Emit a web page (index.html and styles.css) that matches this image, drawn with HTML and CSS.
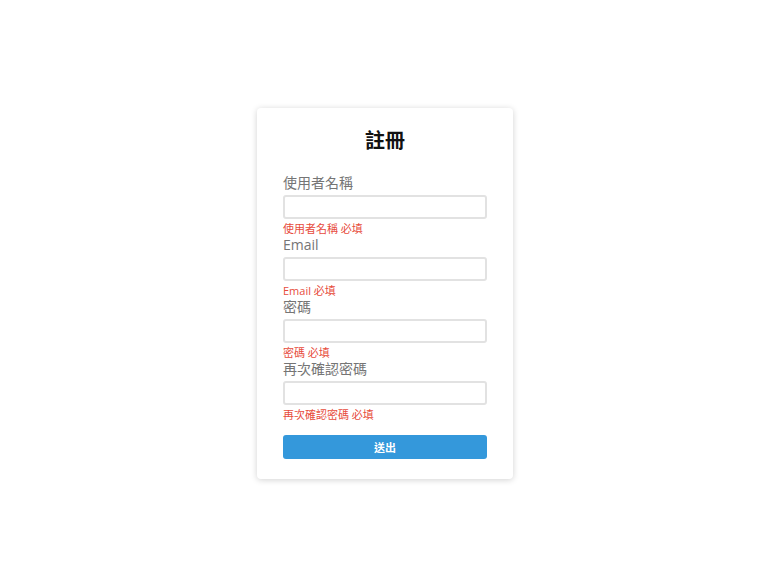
FILE: index.html
```html
<!DOCTYPE html>
<html lang="zh-Hant">
<head>
  <meta charset="UTF-8" />
  <title>註冊</title>
  <link rel="stylesheet" href="styles.css">
</head>
<body>
  <div class="register-card">
    <h2>註冊</h2>
    <form class="register-form">
      <div class="field">
        <label for="username">使用者名稱</label>
        <input type="text" id="username">
        <div class="error">使用者名稱 必填</div>
      </div>
      <div class="field">
        <label for="email">Email</label>
        <input type="email" id="email">
        <div class="error">Email 必填</div>
      </div>
      <div class="field">
        <label for="password">密碼</label>
        <input type="password" id="password">
        <div class="error">密碼 必填</div>
      </div>
      <div class="field">
        <label for="password2">再次確認密碼</label>
        <input type="password" id="password2">
        <div class="error">再次確認密碼 必填</div>
      </div>
      <button type="button">送出</button>
    </form>
  </div>
</body>
</html>
```

FILE: styles.css
```css
body {
  margin: 0;
  min-height: 100vh;
  box-sizing: border-box;
  font-family: "Open Sans", "Noto Sans CJK TC", sans-serif;
  background: #fff;
  display: flex;
  justify-content: center;
  align-items: flex-start;
  padding: 108px 0 0 2px;
}
.register-card {
  width: 256px;
  box-sizing: border-box;
  background: #fff;
  border-radius: 4px;
  box-shadow: 0 1px 6px rgba(0, 0, 0, 0.18);
  padding: 19px 26px 20px;
}
h2 {
  margin: 0 0 19px;
  text-align: center;
  font-size: 20px;
  line-height: 28px;
  font-weight: 700;
  color: #111;
}
.field {
  display: flex;
  flex-direction: column;
}
label {
  font-size: 14px;
  line-height: 18px;
  color: #757575;
  margin-bottom: 3px;
}
input {
  height: 24px;
  box-sizing: border-box;
  border: 2px solid #e2e2e2;
  border-radius: 3px;
  margin: 0;
  padding: 0 6px;
  outline: none;
}
.error {
  font-size: 11px;
  line-height: 15px;
  color: #e74c3c;
  margin-top: 2px;
}
button {
  display: block;
  width: 100%;
  height: 24px;
  margin-top: 13px;
  border: none;
  border-radius: 3px;
  background: #3498db;
  color: #fff;
  font-family: inherit;
  font-size: 11px;
  font-weight: 700;
  cursor: pointer;
}
```
